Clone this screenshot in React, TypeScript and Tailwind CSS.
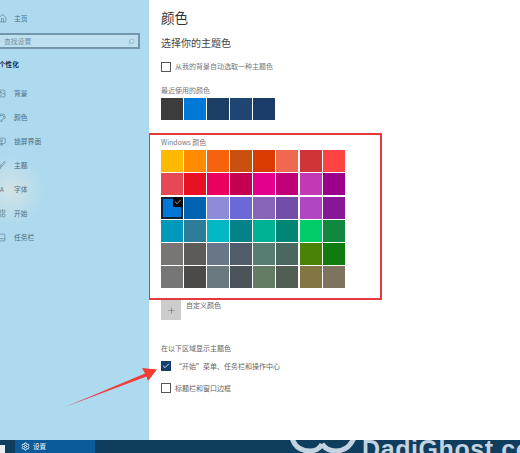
import { Home, Image, Palette, MonitorPlay, Brush, LayoutGrid, PanelBottom, Search, Settings, Plus, Check } from 'lucide-react'

const font = { fontFamily: '"Noto Sans CJK SC", "Liberation Sans", sans-serif' }

const recent = ['#3c3c3c', '#0078d7', '#1c3f66', '#1f4673', '#1b3c68']

const palette = [
  '#ffb900', '#ff8c00', '#f7630c', '#ca5010', '#da3b01', '#ef6950', '#d13438', '#ff4343',
  '#e74856', '#e81123', '#ea005e', '#c30052', '#e3008c', '#bf0077', '#c239b3', '#9a0089',
  '#0078d7', '#0063b1', '#8e8cd8', '#6b69d6', '#8764b8', '#744da9', '#b146c2', '#881798',
  '#0099bc', '#2d7d9a', '#00b7c3', '#038387', '#00b294', '#018574', '#00cc6a', '#10893e',
  '#7a7574', '#5d5a58', '#68768a', '#515c6b', '#567c73', '#486860', '#498205', '#107c10',
  '#767676', '#4c4a48', '#69797e', '#4a5459', '#647c64', '#525e54', '#847545', '#7e735f',
]

const navItems = [
  { label: '背景', icon: Image },
  { label: '颜色', icon: Palette },
  { label: '锁屏界面', icon: MonitorPlay },
  { label: '主题', icon: Brush },
  { label: '字体', icon: null },
  { label: '开始', icon: LayoutGrid },
  { label: '任务栏', icon: PanelBottom },
]

function Sidebar() {
  return (
    <aside className="w-[149px] shrink-0 overflow-hidden bg-[radial-gradient(circle_at_10px_190px,#d3e3e6_0,#aedaef_34px),radial-gradient(circle_at_12px_0,#dfe6dd_0,#aedaef_26px)] bg-[#aedaef] pt-[11px] text-[#4c6c80]">
      <div className="flex h-[14px] items-center gap-[7px] pl-[0px] text-[7px]">
        <Home className="-ml-[2px] h-[9px] w-[9px] text-[#55717f]" strokeWidth={1.5} />
        <span className="text-[6.8px]">主页</span>
      </div>
      <div className="-ml-[2px] mt-[8px] flex h-[16px] w-[142px] items-center justify-between border-2 border-[#7396aa] bg-[#bfe0ef] pl-[4px] pr-[3px] text-[6.8px] text-[#6f8fa2]">
        <span>查找设置</span>
        <Search className="h-[7px] w-[7px] -scale-x-100" strokeWidth={1.5} />
      </div>
      <div className="mt-[9px] h-[12px] -ml-[1px] text-[6.6px] leading-[12px] font-bold text-[#1c2c36]">个性化</div>
      <nav className="mt-[11px]">
        {navItems.map((item) => (
          <div key={item.label} className="flex h-[24px] items-center">
            <span className="-ml-[3px] flex w-[17px] items-center text-[#55717f]">
              {item.icon ? <item.icon className="h-[9px] w-[9px]" strokeWidth={1.5} /> : <span className="pl-[3px] text-[6px]">A</span>}
            </span>
            <span className="text-[6.8px] text-[#4c6c80]">{item.label}</span>
          </div>
        ))}
      </nav>
    </aside>
  )
}

function ColorBox() {
  return (
    <div className="-ml-[13px] mt-[13px] h-[167px] w-[234px] border-2 border-[#e5393a] pl-[11px] pt-[2px]">
      <div className="h-[10px] text-[7px] leading-[10px] text-[#777]">Windows 颜色</div>
      <div className="mt-[3px] grid grid-cols-[repeat(8,22px)] gap-x-[1.1px] gap-y-[1.3px]">
        {palette.map((color, i) => (
          <div key={i} className="relative h-[22px]" style={{ backgroundColor: color }}>
            {i === 16 && (
              <>
                <div className="absolute inset-0 border-2 border-[#10243a]" />
                <div className="absolute top-0 right-0 flex h-[10px] w-[10px] items-center justify-center bg-black">
                  <Check className="h-[8px] w-[8px] text-white" strokeWidth={2} />
                </div>
              </>
            )}
          </div>
        ))}
      </div>
    </div>
  )
}

function Content() {
  return (
    <main className="flex-1 overflow-hidden bg-white pl-[12px] pt-[7px] text-[#555]">
      <div className="h-[20px] text-[13.5px] leading-[20px] text-[#333]">颜色</div>
      <div className="mt-[9px] h-[14px] text-[10px] leading-[14px] text-[#444]">选择你的主题色</div>
      <div className="mt-[11px] flex h-[11px] items-center gap-[4px]">
        <div className="h-[10px] w-[10px] border border-[#555]" />
        <span className="text-[7px] text-[#777]">从我的背景自动选取一种主题色</span>
      </div>
      <div className="mt-[13px] h-[10px] text-[7px] leading-[10px] text-[#777]">最近使用的颜色</div>
      <div className="mt-[3px] flex gap-px">
        {recent.map((color) => (
          <div key={color} className="h-[22px] w-[22px]" style={{ backgroundColor: color }} />
        ))}
      </div>
      <ColorBox />
      <div className="flex h-[20px] gap-[5px]">
        <div className="flex h-[20px] w-[20px] items-center justify-center bg-[#cccccc]">
          <Plus className="h-[9px] w-[9px] text-[#555]" strokeWidth={1.2} />
        </div>
        <span className="text-[7px] leading-[10px] text-[#666]">自定义颜色</span>
      </div>
      <div className="mt-[23px] h-[10px] text-[7px] leading-[10px] text-[#666]">在以下区域显示主题色</div>
      <div className="mt-[8px] flex h-[10px] items-center gap-[4px]">
        <div className="flex h-[10px] w-[10px] items-center justify-center bg-[#123f6b]">
          <Check className="h-[8px] w-[8px] text-white" strokeWidth={2.5} />
        </div>
        <span className="text-[7px] text-[#666]">“开始”菜单、任务栏和操作中心</span>
      </div>
      <div className="mt-[12px] flex h-[10px] items-center gap-[4px]">
        <div className="h-[10px] w-[10px] border border-[#555]" />
        <span className="text-[7px] text-[#666]">标题栏和窗口边框</span>
      </div>
    </main>
  )
}

function Taskbar() {
  return (
    <footer className="relative flex h-[13px] items-stretch overflow-hidden bg-[#0f3d5e]">
      <div className="flex w-[15px] pt-[5px]">
        <div className="h-[8px] w-[5px] bg-[#e8eef2]" />
      </div>
      <div className="flex w-[80px] items-center gap-[3px] bg-[#0b5a9a] pl-[6px] text-white">
        <Settings className="h-[9px] w-[9px]" strokeWidth={2.5} />
        <span className="text-[6.5px] leading-none">设置</span>
      </div>
      {/* watermark clipped by the bottom edge */}
      <svg className="absolute top-0 left-[286px] h-[13px] w-[72px]" viewBox="0 0 72 13" fill="none" stroke="#c3d3df" strokeWidth="5">
        <path d="M6 -2 C9 8 16 11 24 11 C30 11 34 8 36 4" />
        <path d="M36 4 C40 10 45 11 50 11 C58 11 64 7 68 -2" />
      </svg>
      <span className="absolute -top-[6px] left-[362px] text-[25px] leading-[30px] tracking-[0.6px] font-bold whitespace-nowrap text-[#c3d3df]" style={{ fontFamily: '"Liberation Sans", sans-serif' }}>
        DadiGhost.com
      </span>
    </footer>
  )
}

export default function App() {
  return (
    <div className="relative flex h-[453px] w-[520px] flex-col overflow-hidden bg-white" style={font}>
      <div className="flex h-[440px]">
        <Sidebar />
        <Content />
      </div>
      <Taskbar />
      {/* annotation arrow */}
      <svg className="pointer-events-none absolute top-0 left-0 h-[453px] w-[520px]" viewBox="0 0 520 453">
        <defs>
          <linearGradient id="arrow" x1="65" y1="407" x2="157" y2="370" gradientUnits="userSpaceOnUse">
            <stop offset="0" stopColor="#c2506e" />
            <stop offset="0.5" stopColor="#ee4240" />
            <stop offset="1" stopColor="#f23b30" />
          </linearGradient>
        </defs>
        <polygon points="65,407 145,373.5 142,368 157,369.5 148,381 146.5,376.5" fill="url(#arrow)" />
      </svg>
    </div>
  )
}
